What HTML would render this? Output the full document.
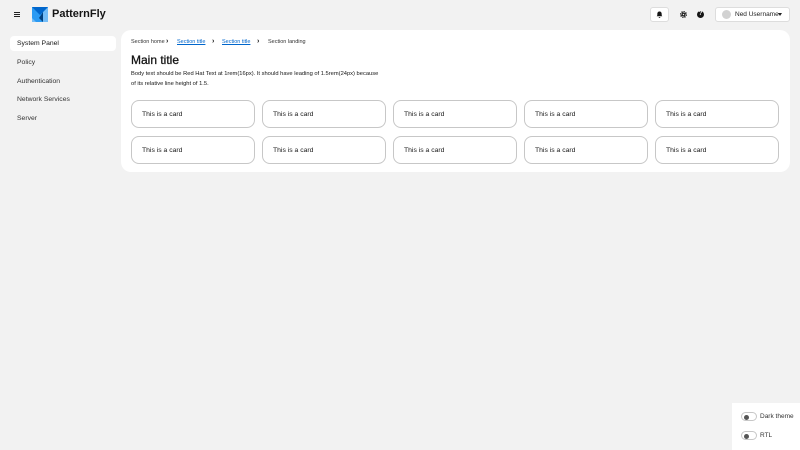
<!DOCTYPE html>
<html><head><style>
*{box-sizing:border-box;margin:0;padding:0}
body{width:800px;height:450px;background:#f2f2f2;font-family:"Liberation Sans",sans-serif;color:#151515;position:relative;overflow:hidden;font-size:7px}
.abs{position:absolute;white-space:nowrap}
.nav{left:10px;width:106px;height:15px;line-height:15px;padding-left:7px;font-size:6.8px;color:#333;border-radius:4px}
.card{position:absolute;width:124px;height:28px;border:1px solid #c7c7c7;border-radius:8px;font-size:6.8px;line-height:27px;padding-left:10px;background:#fff}
.tog{position:absolute;width:16px;height:9px;border:1px solid #c7c7c7;border-radius:5px;background:#fff}
.tog:after{content:"";position:absolute;left:2px;top:1.5px;width:5px;height:5px;border-radius:50%;background:#555}
</style></head><body>
<div class="abs" style="left:14px;top:12px;width:6px;height:5px;border-top:1px solid #222;border-bottom:1px solid #222"></div>
<div class="abs" style="left:14px;top:14px;width:6px;height:1px;background:#222"></div>
<svg class="abs" style="left:31px;top:6px" width="18" height="17" viewBox="0 0 18 17"><rect x="1" y="1" width="16" height="15" fill="#73bcf7"/><path d="M1 1h16l-5 5v10H5L1 12z" fill="#2b9af3"/><path d="M1 1h16l-8 8z" fill="#0066cc"/><path d="M12 6v10l-4-4z" fill="#004080"/></svg>
<div class="abs" style="left:52px;top:8px;font-size:11px;font-weight:bold">PatternFly</div>
<div class="abs" style="left:650px;top:7px;width:19px;height:15px;background:#fff;border:1px solid #ddd;border-radius:3px"></div>
<svg class="abs" style="left:656px;top:11px" width="7" height="7" viewBox="0 0 8 8"><path d="M4 0.5c-2 0-2.5 1.5-2.5 3v1.5L.8 6h6.4l-.7-1V3.5C6.5 2 6 .5 4 .5zM3 6.8h2a1 1 0 0 1-2 0z" fill="#151515"/></svg>
<svg class="abs" style="left:680px;top:11px" width="7" height="7" viewBox="0 0 8 8"><circle cx="4" cy="4" r="3" fill="none" stroke="#151515" stroke-width="2" stroke-dasharray="1.3 1"/><circle cx="4" cy="4" r="2" fill="#151515"/><circle cx="4" cy="4" r=".9" fill="#f2f2f2"/></svg>
<div class="abs" style="left:697px;top:11px;width:7px;height:7px;border-radius:50%;background:#151515;color:#f2f2f2;font-size:6px;font-weight:bold;text-align:center;line-height:7px">?</div>
<div class="abs" style="left:715px;top:7px;width:75px;height:15px;background:#fff;border:1px solid #ddd;border-radius:3px"></div>
<div class="abs" style="left:722px;top:10px;width:9px;height:9px;border-radius:50%;background:#d2d2d2"></div>
<div class="abs" style="left:735px;top:11px;font-size:6.5px;color:#222">Ned Username</div>
<div class="abs" style="left:778px;top:13px;border:2.5px solid transparent;border-top:3px solid #222"></div>
<div class="abs nav" style="top:36px;background:#fff;color:#151515">System Panel</div>
<div class="abs nav" style="top:55px">Policy</div>
<div class="abs nav" style="top:74px">Authentication</div>
<div class="abs nav" style="top:92px">Network Services</div>
<div class="abs nav" style="top:111px">Server</div>
<div class="abs" style="left:121px;top:30px;width:669px;height:142px;background:#fff;border-radius:10px"></div>
<div class="abs" style="left:131px;top:39px;font-size:5.5px;color:#333">Section home</div>
<div class="abs" style="left:166px;top:38px;font-size:7px;font-weight:bold">›</div>
<div class="abs" style="left:177px;top:39px;font-size:5.5px;color:#0066cc;text-decoration:underline">Section title</div>
<div class="abs" style="left:212px;top:38px;font-size:7px;font-weight:bold">›</div>
<div class="abs" style="left:222px;top:39px;font-size:5.5px;color:#0066cc;text-decoration:underline">Section title</div>
<div class="abs" style="left:257px;top:38px;font-size:7px;font-weight:bold">›</div>
<div class="abs" style="left:268px;top:39px;font-size:5.5px;color:#333">Section landing</div>
<div class="abs" style="left:131px;top:53px;font-size:12px;color:#151515;-webkit-text-stroke:0.3px #151515">Main title</div>
<div class="abs" style="left:131px;top:69px;font-size:5.75px;line-height:10px">Body text should be Red Hat Text at 1rem(16px). It should have leading of 1.5rem(24px) because<br>of its relative line height of 1.5.</div>
<div class="card" style="left:131px;top:100px">This is a card</div>
<div class="card" style="left:262px;top:100px">This is a card</div>
<div class="card" style="left:393px;top:100px">This is a card</div>
<div class="card" style="left:524px;top:100px">This is a card</div>
<div class="card" style="left:655px;top:100px">This is a card</div>
<div class="card" style="left:131px;top:136px">This is a card</div>
<div class="card" style="left:262px;top:136px">This is a card</div>
<div class="card" style="left:393px;top:136px">This is a card</div>
<div class="card" style="left:524px;top:136px">This is a card</div>
<div class="card" style="left:655px;top:136px">This is a card</div>
<div class="abs" style="left:732px;top:403px;width:68px;height:47px;background:#fff"></div>
<div class="tog" style="left:741px;top:412px"></div>
<div class="abs" style="left:760px;top:413px;font-size:6.5px;color:#333">Dark theme</div>
<div class="tog" style="left:741px;top:431px"></div>
<div class="abs" style="left:760px;top:432px;font-size:6.5px;color:#333">RTL</div>
</body></html>
